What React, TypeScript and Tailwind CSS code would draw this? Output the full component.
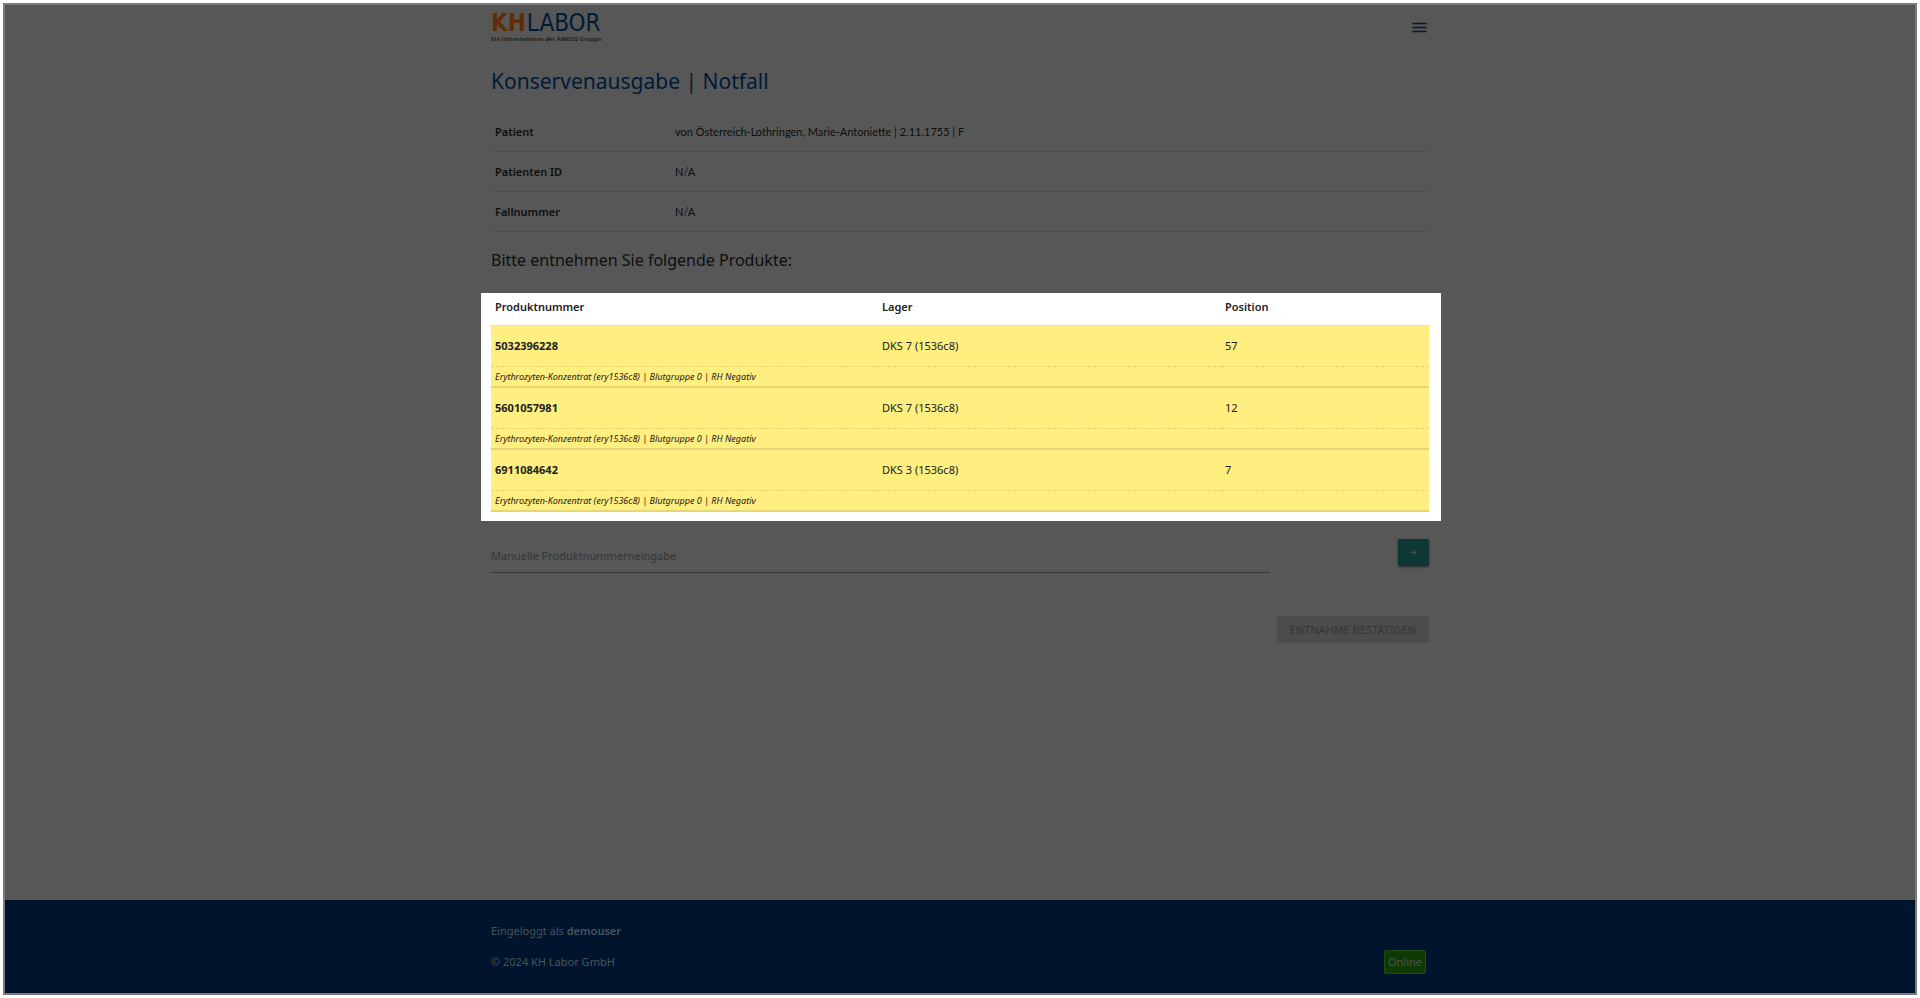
import { MdArrowForward, MdMenu } from 'react-icons/md';

const patientRows = [
  { label: 'Patient', value: 'von Österreich-Lothringen, Marie-Antoniette | 2.11.1755 | F' },
  { label: 'Patienten ID', value: 'N/A' },
  { label: 'Fallnummer', value: 'N/A' },
];

const description = 'Erythrozyten-Konzentrat (ery1536c8) | Blutgruppe 0 | RH Negativ';

const products = [
  { number: '5032396228', storage: 'DKS 7 (1536c8)', position: '57', description },
  { number: '5601057981', storage: 'DKS 7 (1536c8)', position: '12', description },
  { number: '6911084642', storage: 'DKS 3 (1536c8)', position: '7', description },
];

function Logo() {
  return (
    <a href="#" aria-label="KH Labor" className="block text-[#001b38]">
      <span className="flex gap-px font-['DejaVu_Sans_Condensed',sans-serif] text-[24px] leading-6">
        <span className="font-bold text-[#5f2d00]">KH</span>
        <span>LABOR</span>
      </span>
      <span className="block text-[6px] leading-2 font-bold text-[#222222]">
        Ein Unternehmen der AMEOS Gruppe
      </span>
    </a>
  );
}

function PatientTable() {
  return (
    <table className="w-full table-fixed border-separate border-spacing-0 text-left">
      <tbody>
        {patientRows.map((row) => (
          <tr key={row.label} className="h-10">
            <th scope="row" className="w-[184px] border-b border-[#4e4e4e] pl-1 font-semibold">
              {row.label}
            </th>
            <td className="border-b border-[#4e4e4e] font-['Lato',sans-serif]">{row.value}</td>
          </tr>
        ))}
      </tbody>
    </table>
  );
}

function ProductTable() {
  return (
    <section className="-mr-3 -ml-[10px] bg-white pr-3 pb-[9px] pl-[10px] text-[#212121]">
      <table className="w-full table-fixed border-separate border-spacing-0 text-left">
        <thead>
          <tr className="h-[33px]">
            <th className="w-[387px] border-b border-[#e0e0e0] pb-1 pl-1 font-semibold">Produktnummer</th>
            <th className="w-[343px] border-b border-[#e0e0e0] pb-1 pl-1 font-semibold">Lager</th>
            <th className="border-b border-[#e0e0e0] pb-1 pl-1 font-semibold">Position</th>
          </tr>
        </thead>
        {products.map((product) => (
          <tbody key={product.number} className="bg-[#ffee80]">
            <tr className="h-[41px]">
              <td className="border-b border-dashed border-[#e6d673] pl-1 font-bold">{product.number}</td>
              <td className="border-b border-dashed border-[#e6d673] pl-1">{product.storage}</td>
              <td className="border-b border-dashed border-[#e6d673] pl-1">{product.position}</td>
            </tr>
            <tr className="h-[21px]">
              <td colSpan={3} className="border-b-2 border-[#e5d573] pt-px pl-1 text-[9px] leading-4 italic">
                {product.description}
              </td>
            </tr>
          </tbody>
        ))}
      </table>
    </section>
  );
}

export default function App() {
  return (
    <div className="flex min-h-screen flex-col bg-white p-[3px] font-['Noto_Sans',sans-serif] text-[11px] leading-4 text-[#0e0e0e]">
      <div className="flex flex-1 flex-col border-2 border-[#7a7a7a] bg-[#575757]">
        <div className="mx-auto w-full max-w-[938px] flex-1">
          <header className="flex h-11 items-center justify-between">
            <Logo />
            <button type="button" aria-label="Menü" className="text-[#001b38]">
              <MdMenu className="size-[19px]" />
            </button>
          </header>

          <main>
            <h1 className="mt-4 mb-[15px] text-[21px] leading-8 text-[#001b38]">
              Konservenausgabe | Notfall
            </h1>
            <PatientTable />

            <h2 className="mt-4 mb-[21px] text-[16px] leading-6">
              Bitte entnehmen Sie folgende Produkte:
            </h2>
            <ProductTable />

            <form onSubmit={(e) => e.preventDefault()}>
              <div className="mt-[18px] flex items-start justify-between">
                <input
                  type="text"
                  aria-label="Manuelle Produktnummerneingabe"
                  placeholder="Manuelle Produktnummerneingabe"
                  className="h-[34px] w-[83%] border-b border-[#363636] outline-none placeholder:text-[#363636]"
                />
                <button
                  type="submit"
                  aria-label="Hinzufügen"
                  className="flex h-[27px] w-[31px] items-center justify-center rounded-xs bg-[#0d3834] text-[#575757] shadow-sm shadow-black/40"
                >
                  <MdArrowForward className="size-[9px]" />
                </button>
              </div>
              <div className="mt-[43px] flex justify-end">
                <button
                  type="button"
                  disabled
                  className="h-[27px] rounded-xs bg-[#4c4c4c] px-[13px] text-[#363636] uppercase"
                >
                  Entnahme bestätigen
                </button>
              </div>
            </form>
          </main>
        </div>

        <footer className="bg-[#00152d] pt-5 pb-[19px] text-[#4b545c]">
          <div className="mx-auto w-full max-w-[938px]">
            <p className="leading-[22px]">
              Eingeloggt als <strong className="font-semibold">demouser</strong>
            </p>
            <div className="mt-2 flex items-center justify-between">
              <p>© 2024 KH Labor GmbH</p>
              <span className="mr-[3px] rounded-xs border border-[#1c4d12] bg-[#0e3a00] px-[3px] leading-[22px]">
                Online
              </span>
            </div>
          </div>
        </footer>
      </div>
    </div>
  );
}
